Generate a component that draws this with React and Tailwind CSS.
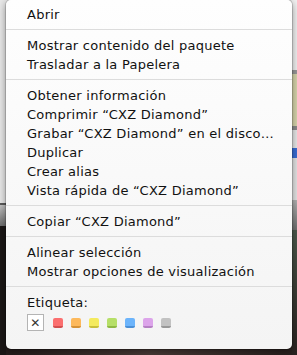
const groups = [
  ['Abrir'],
  ['Mostrar contenido del paquete', 'Trasladar a la Papelera'],
  [
    'Obtener información',
    'Comprimir “CXZ Diamond”',
    'Grabar “CXZ Diamond” en el disco…',
    'Duplicar',
    'Crear alias',
    'Vista rápida de “CXZ Diamond”',
  ],
  ['Copiar “CXZ Diamond”'],
  ['Alinear selección', 'Mostrar opciones de visualización'],
];

const labels = [
  'bg-[#fb6f6f] border-[#d24f4f]',
  'bg-[#fdb95c] border-[#d69236]',
  'bg-[#f4ea5e] border-[#c9bf3a]',
  'bg-[#b6df68] border-[#8eb844]',
  'bg-[#6cb4fb] border-[#4a8fd6]',
  'bg-[#dca4ea] border-[#b580c4]',
  'bg-[#c2c2c2] border-[#989898]',
];

function Separator() {
  return <div className="mt-[5px] mb-[6px] h-px bg-[#dcdcdc]" />;
}

function MenuItem({ label }) {
  return <div className="h-[19px] leading-[19px] pl-[21px] whitespace-nowrap">{label}</div>;
}

export default function App() {
  return (
    <div className="relative w-[297px] h-[355px] overflow-hidden flex bg-[#1e1817]">
      {/* desktop behind the menu */}
      <div className="w-[6px] flex flex-col">
        <div className="h-[203px] bg-[#e9e9e9]" />
        <div className="h-[2px] bg-[#5a5a5a]" />
        <div className="h-[21px] bg-gradient-to-b from-[#c4c4c4] to-[#6e6e6e]" />
        <div className="flex-1 bg-[#1b1716]" />
      </div>
      <div className="flex-1 flex flex-col">
        <div className="h-[230px] bg-[#ececec]" />
        <div className="flex-1 bg-gradient-to-r from-[#241c1b] via-[#4a3b37] to-[#2a211f]" />
      </div>
      <div className="w-[5px] flex flex-col">
        <div className="h-[70px] bg-[#f2f2f2]" />
        <div className="h-[4px] bg-[#9a9a9a]" />
        <div className="h-[52px] bg-[#d8d6ac]" />
        <div className="h-[4px] bg-[#8c8c8c]" />
        <div className="h-[18px] bg-[#e9e9e9]" />
        <div className="h-[10px] bg-[#3b6ed6]" />
        <div className="h-[42px] bg-[#e5e5e5]" />
        <div className="h-[30px] bg-gradient-to-b from-[#b4b4b4] to-[#707070]" />
        <div className="flex-1 bg-gradient-to-b from-[#4d5a4c] to-[#2a2220]" />
      </div>

      {/* context menu */}
      <div
        className="absolute left-[6px] top-0 w-[286px] h-[349px] rounded-[5px] bg-gradient-to-b from-[#fefefe] to-[#f4f4f4] shadow-[0_2px_8px_rgba(0,0,0,0.45)] ring-1 ring-black/15 pt-[5px] text-[13px] tracking-[0.25px] text-[#111]"
        style={{ fontFamily: '"DejaVu Sans", "Lucida Grande", sans-serif' }}
      >
        {groups.map((items, gi) => (
          <div key={gi}>
            {items.map((label) => (
              <MenuItem key={label} label={label} />
            ))}
            <Separator />
          </div>
        ))}
        <MenuItem label="Etiqueta:" />
        <div className="flex items-center pl-[21px] mt-[2px]">
          <div className="w-[17px] h-[17px] border border-[#b4b4b4] bg-white flex items-center justify-center text-[12px] leading-none text-[#333]">
            ✕
          </div>
          <div className="flex gap-[8px] ml-[9px]">
            {labels.map((c, i) => (
              <div key={i} className={`w-[10px] h-[10px] rounded-[2px] border-b-2 ${c}`} />
            ))}
          </div>
        </div>
      </div>
    </div>
  );
}
